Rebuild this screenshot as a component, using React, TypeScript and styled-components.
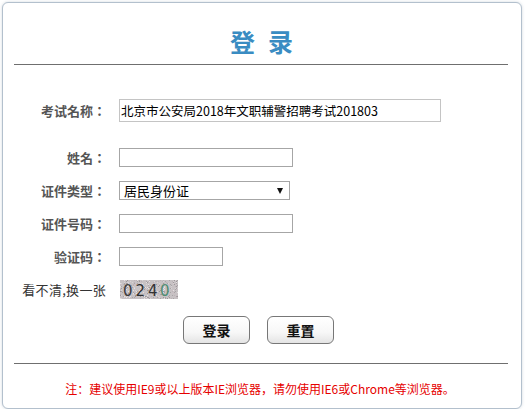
import React from "react";
import styled, { createGlobalStyle } from "styled-components";

const GlobalStyle = createGlobalStyle`
  html, body {
    margin: 0;
    padding: 0;
    background: #ffffff;
  }
  body {
    font-family: "Noto Sans CJK SC", "Noto Sans", sans-serif;
  }
`;

const Page = styled.div`
  padding: 2px 0 0 2px;
`;

const Box = styled.div`
  width: 518px;
  height: 405px;
  border: 1px solid #b3c0cd;
  border-radius: 6px;
  box-shadow: 0 0 3px rgba(120, 140, 160, 0.35);
  background: #ffffff;
  display: flex;
  flex-direction: column;
`;

const Title = styled.h1`
  margin: 26px 0 0 0;
  padding-left: 12px;
  font-size: 25px;
  line-height: 24px;
  font-weight: bold;
  color: #3a8cc2;
  text-align: center;
  letter-spacing: 13px;
`;

const Rule = styled.div<{ $top: number }>`
  margin: ${(p) => p.$top}px 0 0 11px;
  width: 494px;
  height: 1px;
  background: #6f6f6f;
`;

const Form = styled.div`
  display: flex;
  flex-direction: column;
  margin-top: 29px;
`;

const Row = styled.div<{ $gap?: number }>`
  display: flex;
  align-items: center;
  height: 33px;
  margin-top: ${(p) => p.$gap || 0}px;
`;

const Label = styled.div`
  width: 103px;
  text-align: right;
  font-family: "Noto Sans CJK TC", "Noto Sans CJK SC", sans-serif;
  font-size: 13px;
  font-weight: bold;
  color: #555555;
  white-space: nowrap;
  margin-right: 13px;
`;

const PlainLabel = styled(Label)`
  font-family: "Noto Sans CJK SC", "Noto Sans", sans-serif;
  font-weight: normal;
  color: #333333;
  letter-spacing: 0.3px;
`;

const Input = styled.input<{ $w: number; $h?: number }>`
  box-sizing: border-box;
  width: ${(p) => p.$w}px;
  height: ${(p) => p.$h || 19}px;
  border: 1px solid #a6a6a6;
  padding: 0 1px;
  margin: 0;
  font-family: "Noto Sans CJK SC", "Noto Sans", sans-serif;
  font-size: 12px;
  color: #000000;
  background: #ffffff;
  outline: none;
`;

const WideInput = styled(Input)`
  border-color: #c4c4c4;
  font-size: 12.5px;
`;

const SelectBox = styled.div`
  box-sizing: border-box;
  display: flex;
  align-items: center;
  width: 171px;
  height: 19px;
  border: 1px solid #a6a6a6;
  padding-left: 4px;
  background: #ffffff;
  font-size: 13px;
  line-height: 17px;
  color: #000000;
  cursor: default;
`;

const Arrow = styled.span`
  margin-left: auto;
  margin-right: 6px;
  width: 0;
  height: 0;
  border-left: 3px solid transparent;
  border-right: 3px solid transparent;
  border-top: 6px solid #111111;
`;

const Captcha = styled.svg`
  display: block;
  margin-left: 1px;
`;

const Buttons = styled.div`
  display: flex;
  gap: 17px;
  padding-left: 180px;
  margin-top: 10px;
`;

const Button = styled.button`
  width: 67px;
  height: 28px;
  border: 1px solid #777777;
  border-radius: 6px;
  background: linear-gradient(#ffffff 0%, #f7f7f7 60%, #e4e4e4 100%);
  font-family: "Noto Sans CJK SC", "Noto Sans", sans-serif;
  font-size: 14px;
  font-weight: bold;
  color: #111111;
  padding: 0;
  cursor: pointer;
`;

const Note = styled.p`
  margin: 17px 0 0 0;
  text-align: center;
  font-size: 12px;
  line-height: 16px;
  color: #e60000;
  padding-right: 4px;
`;

function noiseDots() {
  let seed = 7;
  const rnd = () => {
    seed = (seed * 9301 + 49297) % 233280;
    return seed / 233280;
  };
  const shades = ["#a9a4a6", "#d8d2d4", "#bcb3b7", "#e6e1e2", "#9d979a", "#cbbfc4"];
  const dots = [];
  for (let i = 0; i < 420; i++) {
    dots.push(
      <rect
        key={i}
        x={Math.floor(rnd() * 58)}
        y={Math.floor(rnd() * 19)}
        width={1}
        height={1}
        fill={shades[Math.floor(rnd() * shades.length)]}
      />
    );
  }
  return dots;
}

const digits = [
  { ch: "0", x: 3, color: "#3a3a3a" },
  { ch: "2", x: 15.5, color: "#2f2f2f" },
  { ch: "4", x: 28, color: "#333333" },
  { ch: "0", x: 40, color: "#4f8d73" },
];

const CaptchaImage = () => (
  <Captcha width="58" height="19" viewBox="0 0 58 19">
    <rect x="0" y="0" width="58" height="19" fill="#c7c2c4" />
    {noiseDots()}
    {digits.map((d, i) => (
      <text
        key={i}
        x={d.x}
        y="15.5"
        fontFamily="'DejaVu Sans', sans-serif"
        fontSize="15"
        fill={d.color}
      >
        {d.ch}
      </text>
    ))}
  </Captcha>
);

export default function App() {
  return (
    <Page>
      <GlobalStyle />
      <Box>
        <Title>登录</Title>
        <Rule $top={11} />
        <Form>
          <Row>
            <Label>考试名称：</Label>
            <WideInput $w={322} $h={23} defaultValue="北京市公安局2018年文职辅警招聘考试201803" />
          </Row>
          <Row $gap={14}>
            <Label>姓名：</Label>
            <Input $w={174} />
          </Row>
          <Row>
            <Label>证件类型：</Label>
            <SelectBox role="combobox" aria-expanded="false">
              居民身份证
              <Arrow />
            </SelectBox>
          </Row>
          <Row>
            <Label>证件号码：</Label>
            <Input $w={174} />
          </Row>
          <Row>
            <Label>验证码：</Label>
            <Input $w={104} />
          </Row>
          <Row>
            <PlainLabel>看不清,换一张</PlainLabel>
            <CaptchaImage />
          </Row>
        </Form>
        <Buttons>
          <Button>登录</Button>
          <Button>重置</Button>
        </Buttons>
        <Rule $top={19} />
        <Note>注：建议使用IE9或以上版本IE浏览器，请勿使用IE6或Chrome等浏览器。</Note>
      </Box>
    </Page>
  );
}
